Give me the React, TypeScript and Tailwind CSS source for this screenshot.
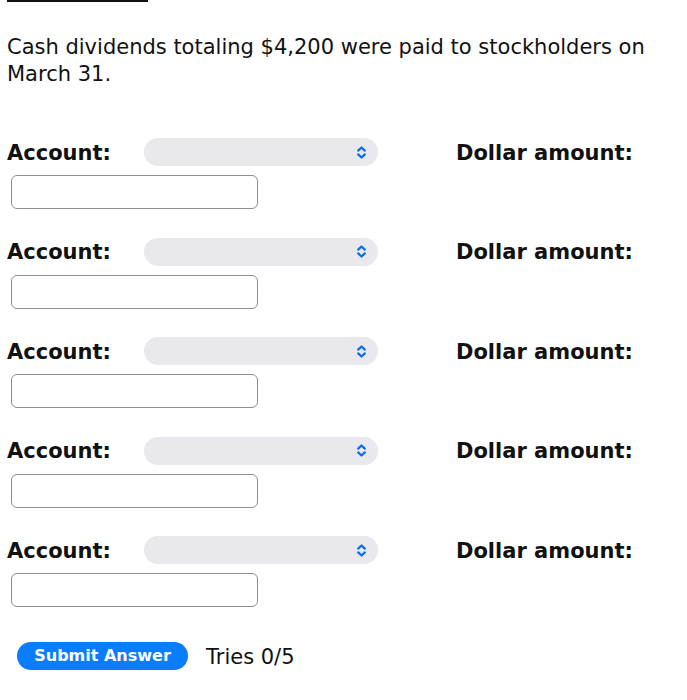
const rows = [1, 2, 3, 4, 5]

function Chevron() {
  return (
    <svg width="9" height="13" viewBox="0 0 9 13" fill="none" stroke="#0a6ee8" strokeWidth="2.2" strokeLinecap="round" strokeLinejoin="round">
      <path d="M1.2 4.6 4.5 1.5 7.8 4.6" />
      <path d="M1.2 8.4 4.5 11.5 7.8 8.4" />
    </svg>
  )
}

function EntryRow({ first }: { first: boolean }) {
  return (
    <div className={first ? 'mt-[50px]' : 'mt-[28.5px]'}>
      <div className="flex h-[28px] items-center">
        <span className="w-[144px] pl-[7px] pt-[3px] text-[21px] font-bold">Account:</span>
        <div className="flex h-[28px] w-[234px] items-center justify-end rounded-full bg-[#e8e8ed] pr-[12px]">
          <Chevron />
        </div>
        <span className="ml-[78px] pt-[3px] text-[21px] font-bold">Dollar amount:</span>
      </div>
      <div className="mt-[9px] pl-[11px]">
        <input className="block h-[34px] w-[247px] rounded-[6px] border border-[#8e8e8e] bg-white" />
      </div>
    </div>
  )
}

export default function App() {
  return (
    <div className="h-[700px] w-[687px] overflow-hidden bg-white font-['DejaVu_Sans',sans-serif] text-[#111]">
      <div className="ml-[7px] h-[2px] w-[141px] bg-[#111]" />
      <p className="mt-[32px] px-[7px] text-[21px] leading-[27px]">
        Cash dividends totaling $4,200 were paid to stockholders on March 31.
      </p>
      {rows.map((r) => (
        <EntryRow key={r} first={r === 1} />
      ))}
      <div className="mt-[32px] flex items-center pl-[17px]">
        <button className="h-[28px] w-[171px] rounded-full bg-[#0a7cff] text-[16px] font-bold text-white">
          Submit Answer
        </button>
        <span className="ml-[18px] pt-[3px] text-[21px]">Tries 0/5</span>
      </div>
      <div className="mx-[8px] mt-[27px] h-[20px] border-t-2 border-[#9fc0ea] bg-[#eef5fd]" />
    </div>
  )
}
